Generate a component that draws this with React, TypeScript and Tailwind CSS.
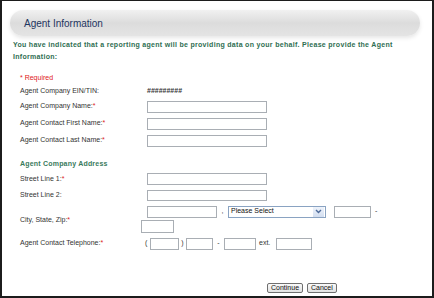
import React from "react";

const font = { fontFamily: '"Liberation Sans", Arial, sans-serif' };

function Req() {
  return <span className="text-[#e0201b]">*</span>;
}

function Input({ w, h = 12 }: { w: number; h?: number }) {
  return (
    <div
      className="border border-[#a9aeb4] bg-white shrink-0"
      style={{ width: w, height: h }}
    />
  );
}

function Row({
  label,
  req,
  h,
  children,
}: {
  label: string;
  req?: boolean;
  h: number;
  children?: React.ReactNode;
}) {
  return (
    <div className="flex items-center" style={{ height: h }}>
      <div className="w-[139px] shrink-0 pl-[18px] text-[7px] text-[#333]">
        {label}
        {req && <Req />}
      </div>
      <div className="flex items-center">{children}</div>
    </div>
  );
}

export default function App() {
  return (
    <div
      className="w-[434px] h-[298px] bg-white border-l-2 border-r-2 border-b-2 border-t border-[#1c1c1c] overflow-hidden flex flex-col"
      style={font}
    >
      <div className="ml-[8px] mt-[9px] w-[410px] h-[26px] rounded-[13px] bg-gradient-to-b from-[#f1f1f1] via-[#dcdcdc] to-[#e4e4e4] shadow-[0_2px_4px_rgba(0,0,0,0.10)] flex items-center pl-[14px]">
        <span className="text-[10px] text-[#1d3560]">Agent Information</span>
      </div>

      <div className="pl-[11px] pr-[20px] mt-[3px] text-[7px] font-bold leading-[12px] tracking-[0.3px] text-[#2f6e52]">
        You have indicated that a reporting agent will be providing data on your behalf. Please provide the Agent Information:
      </div>

      <div className="mt-[8px] flex items-center h-[14px] pl-[18px] text-[7px] text-[#e0201b]">
        * Required
      </div>

      <Row label="Agent Company EIN/TIN:" h={13}>
        <span className="ml-[6px] text-[7px] font-bold text-[#333]">#########</span>
      </Row>
      <Row label="Agent Company Name:" req h={17}>
        <div className="ml-[6px]"><Input w={120} /></div>
      </Row>
      <Row label="Agent Contact First Name:" req h={17}>
        <div className="ml-[6px]"><Input w={120} /></div>
      </Row>
      <Row label="Agent Contact Last Name:" req h={17}>
        <div className="ml-[6px]"><Input w={120} /></div>
      </Row>

      <div className="mt-[8px] h-[14px] flex items-center pl-[18px] text-[7px] font-bold tracking-[0.2px] text-[#3a7a5c]">
        Agent Company Address
      </div>

      <Row label="Street Line 1:" req h={16}>
        <div className="ml-[6px]"><Input w={120} /></div>
      </Row>
      <Row label="Street Line 2:" h={17}>
        <div className="ml-[6px]"><Input w={120} h={11} /></div>
      </Row>

      <div className="flex items-center h-[30px]">
        <div className="w-[139px] shrink-0 pl-[18px] text-[7px] text-[#333] pt-[2px]">
          City, State, Zip:<Req />
        </div>
        <div className="flex flex-col gap-[2px]">
          <div className="flex items-center ml-[6px] text-[7px] text-[#333]">
            <Input w={70} />
            <span className="w-[11px] text-center">,</span>
            <div className="w-[98px] h-[12px] border border-[#8aa3c2] bg-white flex items-center justify-between">
              <span className="pl-[2px] text-[7px] text-[#111]">Please Select</span>
              <div className="w-[11px] h-[10px] mr-[1px] bg-gradient-to-b from-[#eef3fb] to-[#d3def0] flex items-center justify-center">
                <svg width="7" height="5" viewBox="0 0 7 5">
                  <path d="M1 1 L3.5 3.5 L6 1" stroke="#4d6a9a" strokeWidth="1.4" fill="none" />
                </svg>
              </div>
            </div>
            <div className="ml-[8px]"><Input w={37} /></div>
            <span className="ml-[4px]">-</span>
          </div>
          <Input w={33} h={13} />
        </div>
      </div>

      <div className="flex items-center h-[17px] mt-[1px]">
        <div className="w-[139px] shrink-0 pl-[18px] text-[7px] text-[#333]">
          Agent Contact Telephone:<Req />
        </div>
        <div className="flex items-center text-[7px] text-[#333]">
          <span className="ml-[4px] w-[5px]">(</span>
          <Input w={29} />
          <span className="w-[7px] text-center">)</span>
          <Input w={27} />
          <span className="w-[11px] text-center">-</span>
          <Input w={32} />
          <span className="ml-[3px] w-[17px]">ext.</span>
          <Input w={36} />
        </div>
      </div>

      <div className="mt-[31px] flex pl-[265px] gap-[4px]">
        <button className="h-[10px] px-[3px] border border-[#6f6f6f] rounded-[2px] bg-gradient-to-b from-[#fafafa] to-[#e2e2e2] text-[7px] leading-[8px] text-[#111]">
          Continue
        </button>
        <button className="h-[10px] px-[3px] border border-[#6f6f6f] rounded-[2px] bg-gradient-to-b from-[#fafafa] to-[#e2e2e2] text-[7px] leading-[8px] text-[#111]">
          Cancel
        </button>
      </div>
    </div>
  );
}
